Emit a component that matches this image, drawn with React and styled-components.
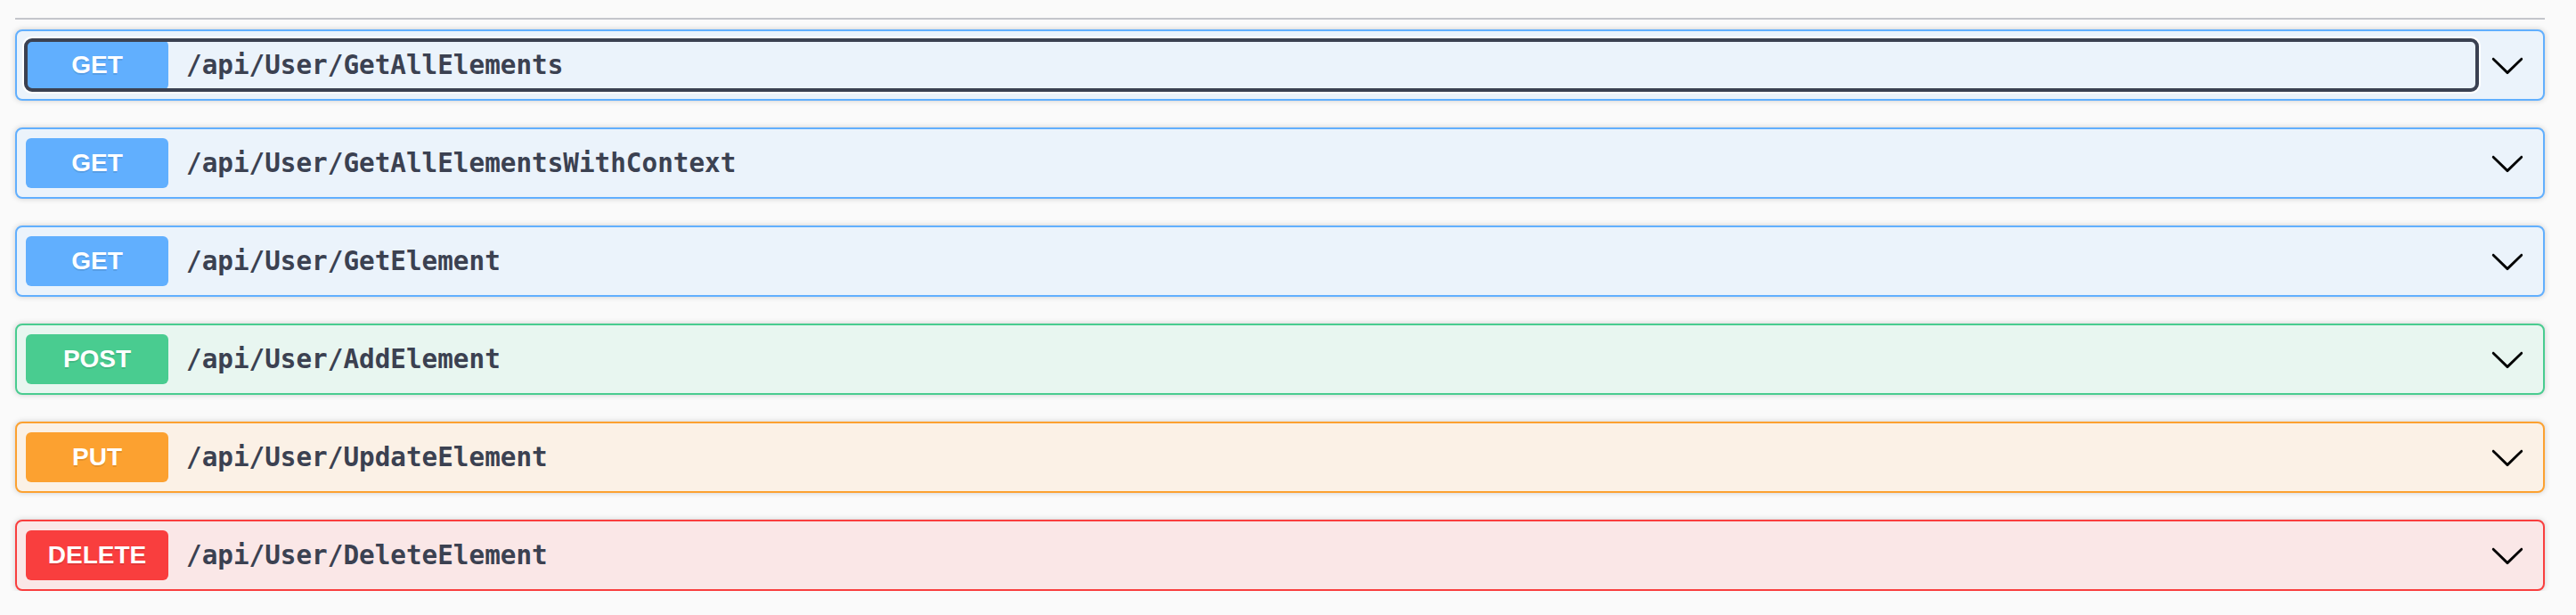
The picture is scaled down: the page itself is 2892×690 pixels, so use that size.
import React from 'react'
import styled, { createGlobalStyle } from 'styled-components'

const GlobalStyle = createGlobalStyle`
  html, body {
    margin: 0;
    padding: 0;
    background: #fafafa;
  }
  body {
    font-family: "Liberation Sans", Arial, sans-serif;
  }
`

// colours per http verb, as swagger-ui paints them
const verbs = {
  GET: { main: '#61affe', bg: '#ebf3fb' },
  POST: { main: '#49cc90', bg: '#e8f6f0' },
  PUT: { main: '#fca130', bg: '#fbf1e6' },
  DELETE: { main: '#f93e3e', bg: '#fae7e7' },
}

const operations = [
  { method: 'GET', path: '/api/User/GetAllElements', focused: true },
  { method: 'GET', path: '/api/User/GetAllElementsWithContext' },
  { method: 'GET', path: '/api/User/GetElement' },
  { method: 'POST', path: '/api/User/AddElement' },
  { method: 'PUT', path: '/api/User/UpdateElement' },
  { method: 'DELETE', path: '/api/User/DeleteElement' },
]

const Page = styled.main`
  padding: 20px 35px 0 17px;
`

const TagLine = styled.div`
  height: 2px;
  background: #c4c6cb;
  margin-bottom: 11px;
`

const List = styled.div`
  display: flex;
  flex-direction: column;
  gap: 30px;
`

const OpBlock = styled.div`
  display: flex;
  align-items: center;
  box-sizing: border-box;
  height: 80px;
  padding: 10px;
  border: 2px solid ${(p) => p.$main};
  border-radius: 8px;
  background: ${(p) => p.$bg};
  box-shadow: 0 0 6px rgba(0, 0, 0, 0.19);
`

const Control = styled.div`
  position: relative;
  flex: 1;
  display: flex;
  align-items: center;
  height: 56px;

  ${(p) =>
    p.$focused &&
    `
    &::after {
      content: '';
      position: absolute;
      inset: -2px 2px -2px -2px;
      border: 4px solid #3b4151;
      border-radius: 9px;
      box-shadow: 0 0 0 2px #fff;
      pointer-events: none;
    }
  `}
`

const Method = styled.span`
  flex: none;
  width: 160px;
  height: 56px;
  display: flex;
  align-items: center;
  justify-content: center;
  border-radius: 6px;
  background: ${(p) => p.$main};
  color: #fff;
  font-family: "Liberation Sans", Arial, sans-serif;
  font-size: 28px;
  font-weight: 700;
  text-shadow: 0 2px 0 rgba(0, 0, 0, 0.1);
`

const Path = styled.span`
  padding: 0 20px;
  font-family: "DejaVu Sans Mono", monospace;
  font-size: 29.3px;
  font-weight: 600;
  color: #3b4151;
`

const Arrow = styled.button`
  flex: none;
  display: flex;
  align-items: center;
  padding: 0 10px;
  border: none;
  background: none;
  svg {
    width: 40px;
    height: 40px;
  }
`

const Chevron = () => (
  <svg viewBox="0 0 20 20" aria-hidden="true">
    <path
      fill="#000"
      d="M17.418 6.109c.272-.268.709-.268.979 0s.271.701 0 .969l-7.908 7.83c-.27.268-.707.268-.979 0l-7.908-7.83c-.27-.268-.27-.701 0-.969.271-.268.709-.268.979 0L10 13.25l7.418-7.141z"
    />
  </svg>
)

const App = () => {
  return (
    <>
      <GlobalStyle />
      <Page>
        <TagLine />
        <List>
          {operations.map((op) => {
            const c = verbs[op.method]
            return (
              <OpBlock key={op.path} $main={c.main} $bg={c.bg}>
                <Control $focused={op.focused}>
                  <Method $main={c.main}>{op.method}</Method>
                  <Path>{op.path}</Path>
                </Control>
                <Arrow aria-label="expand">
                  <Chevron />
                </Arrow>
              </OpBlock>
            )
          })}
        </List>
      </Page>
    </>
  )
}

export default App
